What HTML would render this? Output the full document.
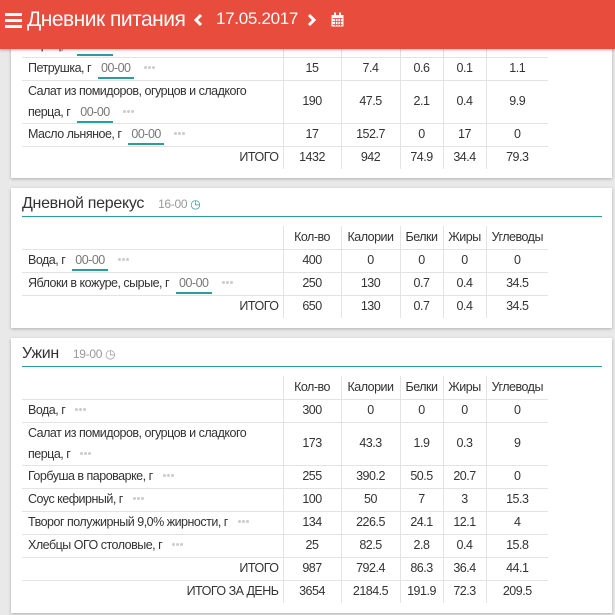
<!DOCTYPE html>
<html><head><meta charset="utf-8"><style>
*{margin:0;padding:0;box-sizing:border-box}
body{width:615px;height:615px;overflow:hidden;background:#e9e9e9;font-family:"Liberation Sans",sans-serif;color:#333;position:relative}
.hdr{position:absolute;left:0;top:0;width:615px;height:49px;background:#e84c3d;box-shadow:0 1px 3px rgba(0,0,0,.3);z-index:5;color:#fff}
.card{position:absolute;left:11px;width:601px;background:#fff;box-shadow:0 1px 3px rgba(0,0,0,.25)}
.ttl{position:absolute;left:11px;font-size:16px;color:#333;letter-spacing:-0.3px}
.tm{font-size:12px;color:#999;margin-left:14px;letter-spacing:-0.3px}
.ln{position:absolute;left:11px;width:580px;height:1px;background:#2a9d9c}
table{position:absolute;left:11px;border-collapse:collapse;table-layout:fixed;font-size:12.5px;letter-spacing:-0.5px}
td{border-top:1px solid #e3e3e3;border-left:1px solid #e3e3e3;text-align:center;height:23px;padding:0;line-height:21px}
td.n{border-left:none;text-align:left;padding-left:6px}
td.r{border-left:none;text-align:right;padding-right:4px}
tr.h td{border-top:none}
tr.d td{height:43px}
.t{display:inline-block;color:#777;border-bottom:2px solid #2a9d9c;padding:0 3px;margin-left:4px;line-height:18px}
.dots{display:inline-block;margin-left:10px;vertical-align:middle;position:relative;top:-3px}
.dots i{display:inline-block;width:3px;height:3px;border-radius:50%;background:#ccc;margin-right:1px}
</style></head><body>
<div class="hdr">
<div style="position:absolute;left:5px;top:13px;width:17px;height:3px;background:#fff;box-shadow:0 6px 0 #fff,0 12px 0 #fff"></div>
<div style="position:absolute;left:27px;top:8px;font-size:21px;letter-spacing:-0.5px">Дневник питания</div>
<svg style="position:absolute;left:193px;top:13px" width="10" height="14"><path d="M8 2L3 7L8 12" stroke="#fff" stroke-width="3" fill="none"/></svg>
<div style="position:absolute;left:216px;top:9px;font-size:17px;letter-spacing:-0.3px">17.05.2017</div>
<svg style="position:absolute;left:307px;top:13px" width="10" height="14"><path d="M2 2L7 7L2 12" stroke="#fff" stroke-width="3" fill="none"/></svg>
<svg style="position:absolute;left:331px;top:12px" width="13" height="15"><rect x="0.5" y="3" width="12" height="11.5" fill="#fff"/><rect x="3" y="0.5" width="2" height="4" fill="#fff"/><rect x="8" y="0.5" width="2" height="4" fill="#fff"/><g fill="#e84c3d"><rect x="1.5" y="6" width="10" height="0.8"/><rect x="1.5" y="9" width="10" height="0.8"/><rect x="1.5" y="12" width="10" height="0.8"/><rect x="4" y="6" width="0.8" height="8"/><rect x="6.5" y="6" width="0.8" height="8"/><rect x="9" y="6" width="0.8" height="8"/></g></svg>
</div>

<div class="card" style="top:20px;height:158px">
<table style="top:14px"><colgroup><col style="width:261px"><col style="width:58px"><col style="width:59px"><col style="width:43px"><col style="width:43px"><col style="width:62px"></colgroup>
<tr class="h"><td class="n">перец, г <span class="t">00-00</span></td><td></td><td></td><td></td><td></td><td></td></tr>
<tr><td class="n">Петрушка, г <span class="t">00-00</span><span class="dots"><i></i><i></i><i></i></span></td><td>15</td><td>7.4</td><td>0.6</td><td>0.1</td><td>1.1</td></tr>
<tr class="d"><td class="n">Салат из помидоров, огурцов и сладкого<br>перца, г <span class="t">00-00</span><span class="dots"><i></i><i></i><i></i></span></td><td>190</td><td>47.5</td><td>2.1</td><td>0.4</td><td>9.9</td></tr>
<tr><td class="n">Масло льняное, г <span class="t">00-00</span><span class="dots"><i></i><i></i><i></i></span></td><td>17</td><td>152.7</td><td>0</td><td>17</td><td>0</td></tr>
<tr><td class="r">ИТОГО</td><td>1432</td><td>942</td><td>74.9</td><td>34.4</td><td>79.3</td></tr>
</table></div>

<div class="card" style="top:188px;height:140px">
<div class="ttl" style="top:7px">Дневной перекус<span class="tm">16-00 <span style="color:#2a9d9c">◷</span></span></div>
<div class="ln" style="top:28px"></div>
<table style="top:38px"><colgroup><col style="width:261px"><col style="width:58px"><col style="width:59px"><col style="width:43px"><col style="width:43px"><col style="width:62px"></colgroup>
<tr class="h"><td class="n"></td><td>Кол-во</td><td>Калории</td><td>Белки</td><td>Жиры</td><td>Углеводы</td></tr>
<tr><td class="n">Вода, г <span class="t">00-00</span><span class="dots"><i></i><i></i><i></i></span></td><td>400</td><td>0</td><td>0</td><td>0</td><td>0</td></tr>
<tr><td class="n">Яблоки в кожуре, сырые, г <span class="t">00-00</span><span class="dots"><i></i><i></i><i></i></span></td><td>250</td><td>130</td><td>0.7</td><td>0.4</td><td>34.5</td></tr>
<tr><td class="r">ИТОГО</td><td>650</td><td>130</td><td>0.7</td><td>0.4</td><td>34.5</td></tr>
</table></div>

<div class="card" style="top:338px;height:275px">
<div class="ttl" style="top:7px">Ужин<span class="tm">19-00 ◷</span></div>
<div class="ln" style="top:28px"></div>
<table style="top:38px"><colgroup><col style="width:261px"><col style="width:58px"><col style="width:59px"><col style="width:43px"><col style="width:43px"><col style="width:62px"></colgroup>
<tr class="h"><td class="n"></td><td>Кол-во</td><td>Калории</td><td>Белки</td><td>Жиры</td><td>Углеводы</td></tr>
<tr><td class="n">Вода, г<span class="dots"><i></i><i></i><i></i></span></td><td>300</td><td>0</td><td>0</td><td>0</td><td>0</td></tr>
<tr class="d"><td class="n">Салат из помидоров, огурцов и сладкого<br>перца, г<span class="dots"><i></i><i></i><i></i></span></td><td>173</td><td>43.3</td><td>1.9</td><td>0.3</td><td>9</td></tr>
<tr><td class="n">Горбуша в пароварке, г<span class="dots"><i></i><i></i><i></i></span></td><td>255</td><td>390.2</td><td>50.5</td><td>20.7</td><td>0</td></tr>
<tr><td class="n">Соус кефирный, г<span class="dots"><i></i><i></i><i></i></span></td><td>100</td><td>50</td><td>7</td><td>3</td><td>15.3</td></tr>
<tr><td class="n">Творог полужирный 9,0% жирности, г<span class="dots"><i></i><i></i><i></i></span></td><td>134</td><td>226.5</td><td>24.1</td><td>12.1</td><td>4</td></tr>
<tr><td class="n">Хлебцы ОГО столовые, г<span class="dots"><i></i><i></i><i></i></span></td><td>25</td><td>82.5</td><td>2.8</td><td>0.4</td><td>15.8</td></tr>
<tr><td class="r">ИТОГО</td><td>987</td><td>792.4</td><td>86.3</td><td>36.4</td><td>44.1</td></tr>
<tr><td class="r">ИТОГО ЗА ДЕНЬ</td><td>3654</td><td>2184.5</td><td>191.9</td><td>72.3</td><td>209.5</td></tr>
</table></div>
</body></html>
